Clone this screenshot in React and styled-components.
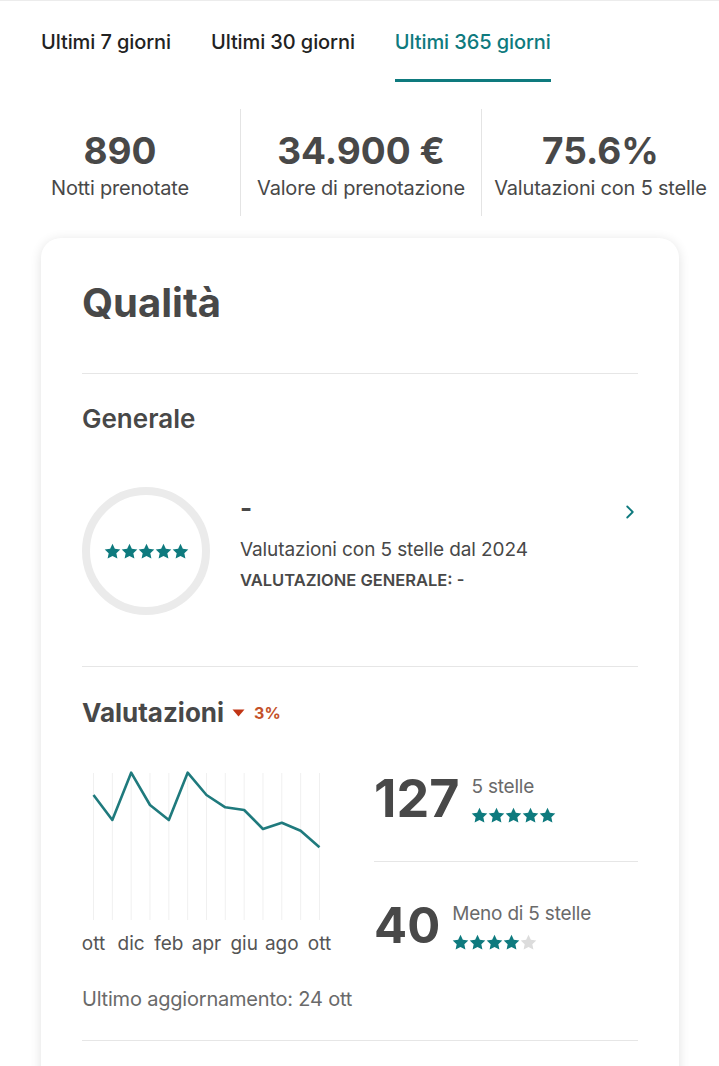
import React from "react";
import styled, { createGlobalStyle } from "styled-components";
import { ChevronRight } from "lucide-react";

const TEAL = "#0e7a7e";
const INK = "#484848";

const GlobalStyle = createGlobalStyle`
  html, body {
    margin: 0;
    padding: 0;
    background: #ffffff;
  }
  body {
    font-family: Inter, "Liberation Sans", sans-serif;
    color: ${INK};
    border-top: 1px solid #ececec;
  }
  * {
    box-sizing: border-box;
  }
`;

const Page = styled.div`
  width: 719px;
  height: 1066px;
  overflow: hidden;
`;

const Tabs = styled.div`
  display: flex;
  gap: 40px;
  padding: 28px 0 0 41px;
`;

const Tab = styled.div`
  font-size: 20px;
  line-height: 26px;
  font-weight: 500;
  letter-spacing: -0.1px;
  white-space: nowrap;
  color: ${(p) => (p.$active ? TEAL : "#222222")};
  padding-bottom: 24px;
  border-bottom: 3px solid ${(p) => (p.$active ? TEAL : "transparent")};
`;

const Stats = styled.div`
  display: grid;
  grid-template-columns: 240px 241px 238px;
  margin-top: 27px;
`;

const Stat = styled.div`
  display: flex;
  flex-direction: column;
  align-items: center;
  padding: 20px 0 14px;
  border-left: ${(p) => (p.$first ? "none" : "1px solid #e4e4e4")};
  height: 107px;
`;

const StatValue = styled.div`
  font-size: 37px;
  font-weight: 700;
  line-height: 44px;
  color: ${INK};
`;

const StatLabel = styled.div`
  font-size: 20px;
  line-height: 26px;
  margin-top: 2px;
  color: ${INK};
  white-space: nowrap;
  letter-spacing: -0.2px;
`;

const Card = styled.div`
  margin: 22px 40px 0 41px;
  background: #fff;
  border-radius: 20px;
  box-shadow: 0 2px 12px rgba(0, 0, 0, 0.12);
  padding: 41px 41px 60px;
  height: 900px;
`;

const CardTitle = styled.h1`
  margin: 0;
  font-size: 40px;
  line-height: 48px;
  font-weight: 700;
  color: ${INK};
`;

const Divider = styled.hr`
  border: none;
  border-top: 1px solid #e6e6e6;
  margin: ${(p) => p.$m || "0"};
`;

const SectionTitle = styled.h2`
  margin: 0;
  font-size: ${(p) => p.$size || "24px"};
  line-height: 32px;
  font-weight: ${(p) => p.$weight || 600};
  color: ${INK};
  display: flex;
  align-items: center;
`;

const Trend = styled.span`
  display: inline-flex;
  align-items: center;
  gap: 9px;
  margin-left: 8px;
  font-size: 16px;
  font-weight: 700;
  color: #c4512a;
`;

const GeneralRow = styled.div`
  display: flex;
  align-items: center;
  margin-top: 52px;
`;

const Ring = styled.div`
  width: 128px;
  height: 128px;
  border-radius: 50%;
  border: 8px solid #ebebeb;
  display: flex;
  align-items: center;
  justify-content: center;
  flex-shrink: 0;
`;

const GeneralText = styled.div`
  margin-left: 30px;
  flex: 1;
  display: flex;
  flex-direction: column;
  margin-top: -19px;
`;

const Dash = styled.div`
  font-size: 26px;
  font-weight: 700;
  line-height: 28px;
  color: ${INK};
`;

const GeneralTop = styled.div`
  display: flex;
  justify-content: space-between;
  align-items: center;

  svg {
    margin: 8px -3px 0 0;
  }
`;

const GeneralLine = styled.div`
  font-size: 19px;
  line-height: 24px;
  margin-top: 15px;
  color: ${INK};
  letter-spacing: -0.1px;
`;

const GeneralCaps = styled.div`
  font-size: 16.5px;
  line-height: 20px;
  margin-top: 8px;
  font-weight: 600;
  text-transform: uppercase;
  color: ${INK};
`;

const RatingsRow = styled.div`
  display: flex;
  margin-top: 36px;
`;

const ChartBox = styled.div`
  width: 292px;
  flex-shrink: 0;
`;

const Counts = styled.div`
  flex: 1;
  display: flex;
  flex-direction: column;
  padding-top: 2px;
`;

const CountRow = styled.div`
  display: flex;
  align-items: center;
  gap: 12px;
  height: 64px;
`;

const CountNumber = styled.div`
  font-size: ${(p) => p.$size || "48px"};
  font-weight: 700;
  line-height: 56px;
  color: ${INK};
`;

const CountInfo = styled.div`
  display: flex;
  flex-direction: column;
  gap: 9px;
  margin-top: ${(p) => p.$shift || "0"};
`;

const CountLabel = styled.div`
  font-size: 19px;
  line-height: 22px;
  color: #6a6a6a;
  letter-spacing: -0.2px;
`;

const StarRow = styled.div`
  display: flex;
  gap: 0;
`;

const Updated = styled.div`
  font-size: 20px;
  line-height: 24px;
  color: #6a6a6a;
  margin-top: 26px;
  letter-spacing: -0.2px;
`;

const Star = ({ size = 15, color = TEAL }) => (
  <svg width={size} height={size} viewBox="0 0 24 24">
    <path
      d="M12 1l3.3 7 7.7 1-5.6 5.3 1.5 7.7L12 18.3 5.1 22l1.5-7.7L1 9l7.7-1z"
      fill={color}
    />
  </svg>
);

const Stars = ({ filled = 5, size }) => (
  <StarRow>
    {[0, 1, 2, 3, 4].map((i) => (
      <Star key={i} size={size} color={i < filled ? TEAL : "#dcdcdc"} />
    ))}
  </StarRow>
);

// monthly trend, y in px from the top of the chart
const points = [30, 55, 7.7, 40, 55, 7.7, 30, 42.3, 45, 64, 57.7, 65.7, 82.3];
const gx = (i) => 11.5 + i * 18.83;
const months = ["ott", "dic", "feb", "apr", "giu", "ago", "ott"];

const Chart = () => (
  <svg width="292" height="192" viewBox="0 0 292 192">
    {points.map((_, i) => (
      <line
        key={i}
        x1={gx(i)}
        x2={gx(i)}
        y1="8"
        y2="155"
        stroke="#f0f0f0"
        strokeWidth="1"
      />
    ))}
    <polyline
      points={points.map((y, i) => `${gx(i)},${y}`).join(" ")}
      fill="none"
      stroke="#1f7a7d"
      strokeWidth="2.6"
      strokeLinejoin="round"
    />
    {months.map((m, i) => (
      <text
        key={i}
        x={gx(i * 2)}
        y="185"
        textAnchor="middle"
        fontSize="19"
        fill="#555"
        fontFamily="Inter, 'Liberation Sans', sans-serif"
      >
        {m}
      </text>
    ))}
  </svg>
);

const tabs = ["Ultimi 7 giorni", "Ultimi 30 giorni", "Ultimi 365 giorni"];
const stats = [
  { value: "890", label: "Notti prenotate" },
  { value: "34.900 €", label: "Valore di prenotazione" },
  { value: "75.6%", label: "Valutazioni con 5 stelle" },
];

export default function App() {
  return (
    <Page>
      <GlobalStyle />
      <Tabs>
        {tabs.map((t, i) => (
          <Tab key={t} $active={i === 2}>
            {t}
          </Tab>
        ))}
      </Tabs>

      <Stats>
        {stats.map((s, i) => (
          <Stat key={s.label} $first={i === 0}>
            <StatValue>{s.value}</StatValue>
            <StatLabel>{s.label}</StatLabel>
          </Stat>
        ))}
      </Stats>

      <Card>
        <CardTitle>Qualità</CardTitle>
        <Divider $m="46px 0 29px" />

        <SectionTitle $size="26px">Generale</SectionTitle>
        <GeneralRow>
          <Ring>
            <Stars size={17} />
          </Ring>
          <GeneralText>
            <GeneralTop>
              <Dash>-</Dash>
              <ChevronRight size={22} color={TEAL} strokeWidth={2} />
            </GeneralTop>
            <GeneralLine>Valutazioni con 5 stelle dal 2024</GeneralLine>
            <GeneralCaps>Valutazione generale: -</GeneralCaps>
          </GeneralText>
        </GeneralRow>
        <Divider $m="51px 0 30px" />

        <SectionTitle $size="26px" $weight={700}>
          Valutazioni
          <Trend>
            <svg width="13" height="8" viewBox="0 0 13 8">
              <path d="M0.5 0.5h12L6.5 7.5z" fill="#c13515" />
            </svg>
            3%
          </Trend>
        </SectionTitle>

        <RatingsRow>
          <ChartBox>
            <Chart />
          </ChartBox>
          <Counts>
            <CountRow>
              <CountNumber $size="52px">127</CountNumber>
              <CountInfo $shift="2px">
                <CountLabel>5 stelle</CountLabel>
                <Stars size={17} />
              </CountInfo>
            </CountRow>
            <Divider $m="30px 0 32px" />
            <CountRow>
              <CountNumber $size="49px">40</CountNumber>
              <CountInfo $shift="2px">
                <CountLabel>Meno di 5 stelle</CountLabel>
                <Stars size={17} filled={4} />
              </CountInfo>
            </CountRow>
          </Counts>
        </RatingsRow>

        <Updated>Ultimo aggiornamento: 24 ott</Updated>
        <Divider $m="29px 0 0" />
      </Card>
    </Page>
  );
}
